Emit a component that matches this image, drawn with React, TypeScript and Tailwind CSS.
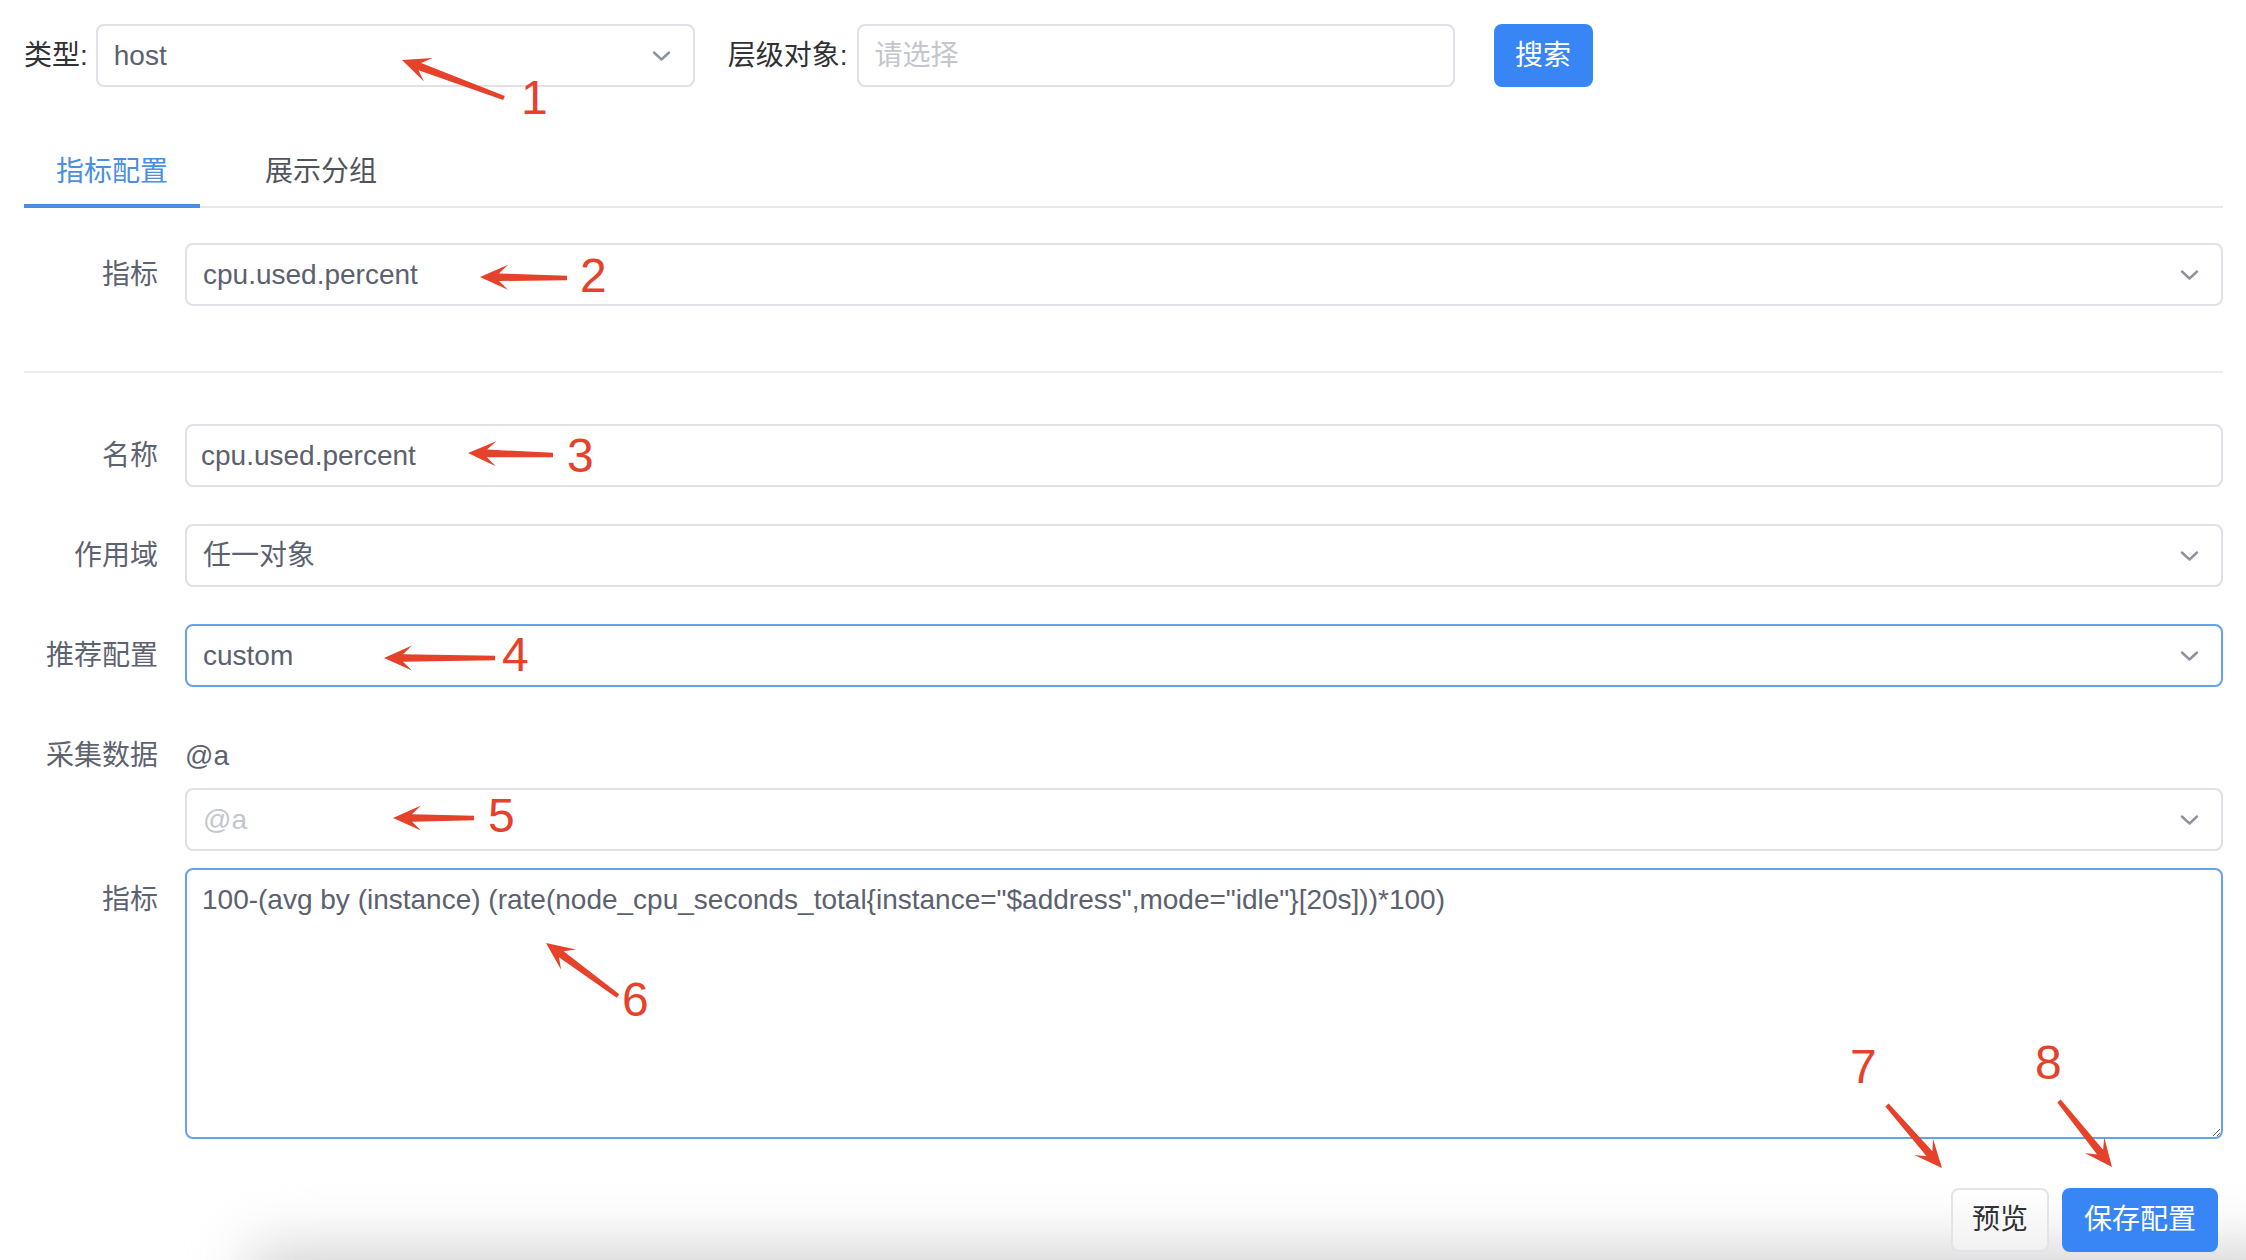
import React from 'react';

const RED = '#e6412a';

// tail -> tip arrow, drawn as one polygon with a swept head
function arrowPoints(x1: number, y1: number, x2: number, y2: number) {
  const dx = x2 - x1;
  const dy = y2 - y1;
  const len = Math.hypot(dx, dy);
  const ux = dx / len;
  const uy = dy / len;
  const px = -uy;
  const py = ux;
  const L = 28;
  const N = 19;
  const W = 12.5;
  const t0 = 2.2;
  const t1 = 3.8;
  const bx = x2 - ux * N;
  const by = y2 - uy * N;
  const wx = x2 - ux * L;
  const wy = y2 - uy * L;
  const pts = [
    [x1 + px * t0, y1 + py * t0],
    [bx + px * t1, by + py * t1],
    [wx + px * W, wy + py * W],
    [x2, y2],
    [wx - px * W, wy - py * W],
    [bx - px * t1, by - py * t1],
    [x1 - px * t0, y1 - py * t0],
  ];
  return pts.map((p) => `${p[0].toFixed(1)},${p[1].toFixed(1)}`).join(' ');
}

const arrows = [
  [504, 98, 402, 60],
  [567, 278, 480, 277],
  [553, 455, 468, 453],
  [495, 658, 384, 658],
  [474, 818, 393, 818],
  [618, 996, 546, 943],
  [1887, 1105, 1942, 1168],
  [2059, 1101, 2112, 1167],
];

const numbers = [
  { n: '1', cls: 'left-[521px] top-[74px]' },
  { n: '2', cls: 'left-[580px] top-[252px]' },
  { n: '3', cls: 'left-[567px] top-[432px]' },
  { n: '4', cls: 'left-[502px] top-[631px]' },
  { n: '5', cls: 'left-[488px] top-[792px]' },
  { n: '6', cls: 'left-[622px] top-[976px]' },
  { n: '7', cls: 'left-[1850px] top-[1043px]' },
  { n: '8', cls: 'left-[2035px] top-[1039px]' },
];

function ChevronDown() {
  return (
    <svg width="19" height="12" viewBox="0 0 19 12" fill="none">
      <path d="M2 2.5l7.5 7 7.5-7" stroke="#8d929c" strokeWidth="2.4" strokeLinecap="round" strokeLinejoin="round" />
    </svg>
  );
}

function SelectBox({ value, placeholder, focused }: { value?: string; placeholder?: string; focused?: boolean }) {
  return (
    <div
      className={`flex h-[63px] items-center justify-between rounded-[8px] border-2 bg-white pl-[16px] pr-[22px] ${
        focused ? 'border-[#64a2ec]' : 'border-[#dfe1e6]'
      }`}
    >
      <span className={value ? 'text-[#5c6170]' : 'text-[#c3c6cc]'}>{value || placeholder}</span>
      <ChevronDown />
    </div>
  );
}

function FormRow({ label, children, className = '' }: { label: string; children: React.ReactNode; className?: string }) {
  return (
    <div className={`flex items-center ${className}`}>
      <div className="w-[161px] shrink-0 pr-[27px] text-right text-[#5e6371]">{label}</div>
      <div className="min-w-0 flex-1">{children}</div>
    </div>
  );
}

export default function App() {
  return (
    <div className="relative h-[1260px] w-[2246px] overflow-hidden bg-white font-['Liberation_Sans','Noto_Sans_CJK_SC',sans-serif] text-[28px] leading-[36px]">
      {/* soft shadow along the bottom edge */}
      <div className="pointer-events-none absolute left-[250px] right-[-60px] top-[1248px] h-[110px] bg-[#d2d2d2] blur-[30px]" />

      <div className="relative">
        {/* search bar */}
        <div className="flex items-center pl-[24px] pt-[24px]">
          <span className="text-[#303133]">类型:</span>
          <div className="ml-[8px] flex h-[63px] w-[599px] items-center justify-between rounded-[8px] border-2 border-[#dfe1e6] pl-[16px] pr-[22px]">
            <span className="text-[#5c6170]">host</span>
            <ChevronDown />
          </div>
          <span className="ml-[33px] text-[#303133]">层级对象:</span>
          <div className="ml-[9px] flex h-[63px] w-[598px] items-center rounded-[8px] border-2 border-[#dfe1e6] pl-[16px]">
            <span className="text-[#c3c6cc]">请选择</span>
          </div>
          <button className="ml-[39px] h-[63px] w-[99px] rounded-[8px] bg-[#3886f5] text-white">搜索</button>
        </div>

        {/* tabs */}
        <div className="ml-[24px] mr-[23px] mt-[41px] flex gap-[33px] border-b-2 border-[#e4e7ed]">
          <div className="-mb-[2px] h-[80px] border-b-4 border-[#4a8ee3] px-[32px] pt-[26px] text-[#4a8fe0]">指标配置</div>
          <div className="-mb-[2px] h-[80px] border-b-4 border-transparent px-[32px] pt-[26px] text-[#50545e]">展示分组</div>
        </div>

        <div className="pl-[24px] pr-[23px]">
          <FormRow label="指标" className="mt-[35px]">
            <SelectBox value="cpu.used.percent" />
          </FormRow>

          <div className="mt-[65px] h-[2px] bg-[#ebedf1]" />

          <FormRow label="名称" className="mt-[51px]">
            <div className="flex h-[63px] items-center rounded-[8px] border-2 border-[#dfe1e6] pl-[14px] text-[#5c6170]">
              cpu.used.percent
            </div>
          </FormRow>

          <FormRow label="作用域" className="mt-[37px]">
            <SelectBox value="任一对象" />
          </FormRow>

          <FormRow label="推荐配置" className="mt-[37px]">
            <SelectBox value="custom" focused />
          </FormRow>

          <FormRow label="采集数据" className="mt-[37px] h-[63px]">
            <span className="text-[#5c6170]">@a</span>
          </FormRow>

          <div className="mt-[1px] pl-[161px]">
            <SelectBox placeholder="@a" />
          </div>

          <div className="mt-[17px] flex items-start">
            <div className="w-[161px] shrink-0 pr-[27px] pt-[14px] text-right text-[#5e6371]">指标</div>
            <textarea
              readOnly
              className="h-[271px] min-w-0 flex-1 rounded-[8px] border-2 border-[#64a2ec] pl-[15px] pt-[12px] text-[#5c6170] outline-none"
              defaultValue={'100-(avg by (instance) (rate(node_cpu_seconds_total{instance="$address",mode="idle"}[20s]))*100)'}
            />
          </div>

          <div className="mt-[49px] flex justify-end gap-[13px] pr-[5px]">
            <button className="h-[64px] w-[98px] rounded-[8px] border-2 border-[#e3e4e7] bg-gradient-to-b from-white to-[#f1f1f1] text-[#303133]">
              预览
            </button>
            <button className="h-[64px] w-[156px] rounded-[8px] bg-[#3886f5] text-white">保存配置</button>
          </div>
        </div>
      </div>

      {/* annotation arrows */}
      <svg className="pointer-events-none absolute left-0 top-0" width="2246" height="1260" viewBox="0 0 2246 1260">
        {arrows.map((a, i) => (
          <polygon key={i} points={arrowPoints(a[0], a[1], a[2], a[3])} fill={RED} />
        ))}
      </svg>
      {numbers.map((item) => (
        <span
          key={item.n}
          className={`pointer-events-none absolute font-['Liberation_Sans',sans-serif] text-[48px] leading-[48px] text-[#e6412a] ${item.cls}`}
        >
          {item.n}
        </span>
      ))}
    </div>
  );
}
